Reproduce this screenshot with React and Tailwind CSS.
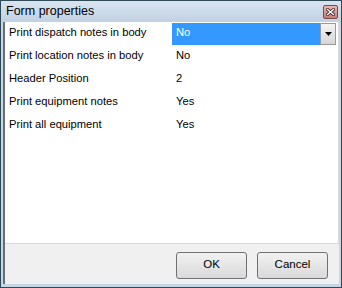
import React from "react";

const rows = [
  ["Print dispatch notes in body", "No"],
  ["Print location notes in body", "No"],
  ["Header Position", "2"],
  ["Print equipment notes", "Yes"],
  ["Print all equipment", "Yes"],
];

export default function App() {
  return (
    <div
      className="w-[342px] h-[288px] flex flex-col bg-[#c7d7e8] border border-[#2c4a57] overflow-hidden"
      style={{ fontFamily: '"Liberation Sans", Arial, sans-serif' }}
    >
      <div className="h-[21px] shrink-0 flex items-center justify-between pl-[5px] pr-[3px] bg-gradient-to-b from-[#d9e4f0] to-[#c1d1e2]">
        <span className="text-[12.5px] text-black leading-none">Form properties</span>
        <div className="w-[15px] h-[14px] rounded-[2px] border border-[#7a4a4a] bg-gradient-to-b from-[#ebb9b2] to-[#c77d74] flex items-center justify-center">
          <svg width="9" height="8" viewBox="0 0 9 8">
            <path d="M1.5 1.5 L7.5 6.5 M7.5 1.5 L1.5 6.5" stroke="#3a2a2a" strokeWidth="3" strokeLinecap="square" />
            <path d="M1.5 1.5 L7.5 6.5 M7.5 1.5 L1.5 6.5" stroke="#ffffff" strokeWidth="1.4" strokeLinecap="square" />
          </svg>
        </div>
      </div>
      <div className="flex-1 flex flex-col mx-[2px] mb-[3px] border-l-2 border-[#6d6d6d] bg-[#f0f0f0]">
        <div className="h-[222px] shrink-0 bg-white border-b border-r border-[#d8d8d8] flex flex-col">
          {rows.map(([label, value], i) => (
            <div key={i} className="h-[23px] flex items-center text-[11.2px] text-black">
              <div className="w-[167px] pl-[4px] shrink-0 pb-[2px]">{label}</div>
              {i === 0 ? (
                <div className="flex-1 h-[22px] flex items-center mr-[2px]">
                  <div className="flex-1 h-full bg-[#3399ff] text-white flex items-center pl-[4px] pb-[2px]">{value}</div>
                  <div className="w-[16px] h-full border border-[#9a9a9a] bg-gradient-to-b from-[#f4f4f4] to-[#d6d6d6] flex items-center justify-center">
                    <svg width="7" height="4" viewBox="0 0 7 4">
                      <path d="M0 0 H7 L3.5 4 Z" fill="#000" />
                    </svg>
                  </div>
                </div>
              ) : (
                <div className="flex-1 pl-[4px] pb-[2px]">{value}</div>
              )}
            </div>
          ))}
        </div>
        <div className="flex-1 flex items-center justify-end gap-[10px] pr-[11px] pt-[2px]">
          <button className="w-[71px] h-[27px] rounded-[3px] border border-[#707070] bg-gradient-to-b from-[#f2f2f2] to-[#d9d9d9] text-[11.5px] text-black">OK</button>
          <button className="w-[71px] h-[27px] rounded-[3px] border border-[#707070] bg-gradient-to-b from-[#f2f2f2] to-[#d9d9d9] text-[11.5px] text-black">Cancel</button>
        </div>
      </div>
    </div>
  );
}
